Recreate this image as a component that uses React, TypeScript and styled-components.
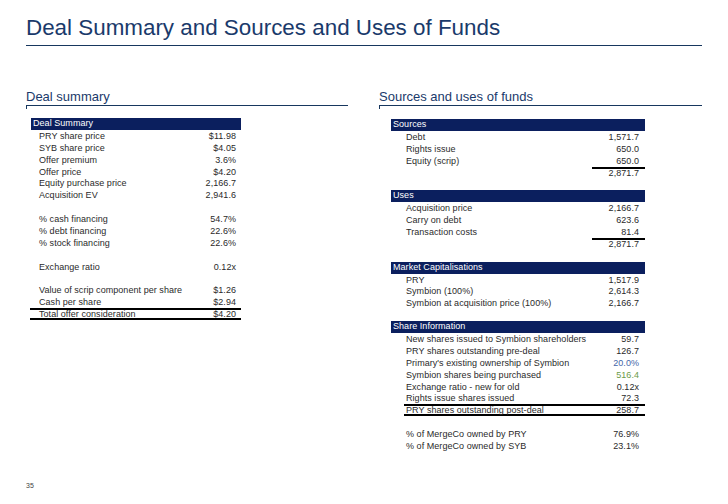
import React from "react";
import styled, { createGlobalStyle } from "styled-components";

const Global = createGlobalStyle`
  html, body { margin: 0; padding: 0; background: #fff; }
  body { font-family: "Liberation Sans", Arial, sans-serif; }
`;

const Page = styled.div`
  width: 728px;
  height: 504px;
  box-sizing: border-box;
  padding: 15px 26px 0 26px;
  display: flex;
  flex-direction: column;
  position: relative;
`;

const Title = styled.h1`
  margin: 0;
  font-weight: normal;
  font-size: 22.4px;
  line-height: 26px;
  color: #1a3a6b;
  padding-bottom: 4px;
  border-bottom: 1px solid #17375e;
`;

const Columns = styled.div`
  display: grid;
  grid-template-columns: 322px 323px;
  column-gap: 31px;
  margin-top: 43px;
`;

const Column = styled.div`
  display: flex;
  flex-direction: column;
`;

const SectionHead = styled.div`
  font-size: 13px;
  line-height: 15px;
  color: #1a3a6b;
  padding-bottom: 1px;
  border-bottom: 1px solid #17375e;
  position: relative;
  &::after {
    content: "";
    position: absolute;
    left: 0;
    bottom: -4px;
    width: 1px;
    height: 3px;
    background: #17375e;
  }
`;

const Table = styled.div<{ $left: number; $width: number; $top: number }>`
  margin-left: ${(p) => p.$left}px;
  width: ${(p) => p.$width}px;
  margin-top: ${(p) => p.$top}px;
  display: flex;
  flex-direction: column;
  font-size: 9px;
  letter-spacing: 0.05px;
  color: #2a2a2a;
`;

const Header = styled.div`
  height: 11.9px;
  line-height: 11.9px;
  background: #0b1f5e;
  color: #fff;
  padding-left: 2px;
  font-size: 9px;
`;

const Row = styled.div<{
  $indent: number;
  $pad: number;
  $lineStart?: number;
  $lines?: boolean;
}>`
  height: 11.9px;
  display: flex;
  align-items: center;
  margin-left: ${(p) => p.$lineStart ?? 0}px;
  padding-left: ${(p) => p.$indent - (p.$lineStart ?? 0)}px;
  padding-right: ${(p) => p.$pad}px;
  box-shadow: ${(p) =>
    p.$lines ? "inset 0 2px 0 #000, inset 0 -2px 0 #000" : "none"};
`;

const Label = styled.span`
  flex: 1;
  white-space: nowrap;
`;

const Value = styled.span<{ $color?: string }>`
  text-align: right;
  white-space: nowrap;
  color: ${(p) => p.$color ?? "inherit"};
`;

const TotalRow = styled.div`
  height: 11.9px;
  display: flex;
  justify-content: flex-end;
`;

const TotalValue = styled.span<{ $pad: number }>`
  width: 53px;
  box-sizing: border-box;
  text-align: right;
  padding-right: ${(p) => p.$pad}px;
  border-top: 2px solid #000;
  line-height: 9px;
`;

const Blank = styled.div`
  height: 11.9px;
`;

const PageNum = styled.div`
  position: absolute;
  left: 26px;
  top: 482px;
  font-size: 7px;
  color: #444;
`;

type Item =
  | { kind: "header"; label: string }
  | { kind: "row"; label: string; value: string; color?: string; lines?: boolean }
  | { kind: "total"; value: string }
  | { kind: "blank" };

const left: Item[] = [
  { kind: "header", label: "Deal Summary" },
  { kind: "row", label: "PRY share price", value: "$11.98" },
  { kind: "row", label: "SYB share price", value: "$4.05" },
  { kind: "row", label: "Offer premium", value: "3.6%" },
  { kind: "row", label: "Offer price", value: "$4.20" },
  { kind: "row", label: "Equity purchase price", value: "2,166.7" },
  { kind: "row", label: "Acquisition EV", value: "2,941.6" },
  { kind: "blank" },
  { kind: "row", label: "% cash financing", value: "54.7%" },
  { kind: "row", label: "% debt financing", value: "22.6%" },
  { kind: "row", label: "% stock financing", value: "22.6%" },
  { kind: "blank" },
  { kind: "row", label: "Exchange ratio", value: "0.12x" },
  { kind: "blank" },
  { kind: "row", label: "Value of scrip component per share", value: "$1.26" },
  { kind: "row", label: "Cash per share", value: "$2.94" },
  { kind: "row", label: "Total offer consideration", value: "$4.20", lines: true },
];

const right: Item[] = [
  { kind: "header", label: "Sources" },
  { kind: "row", label: "Debt", value: "1,571.7" },
  { kind: "row", label: "Rights issue", value: "650.0" },
  { kind: "row", label: "Equity (scrip)", value: "650.0" },
  { kind: "total", value: "2,871.7" },
  { kind: "blank" },
  { kind: "header", label: "Uses" },
  { kind: "row", label: "Acquisition price", value: "2,166.7" },
  { kind: "row", label: "Carry on debt", value: "623.6" },
  { kind: "row", label: "Transaction costs", value: "81.4" },
  { kind: "total", value: "2,871.7" },
  { kind: "blank" },
  { kind: "header", label: "Market Capitalisations" },
  { kind: "row", label: "PRY", value: "1,517.9" },
  { kind: "row", label: "Symbion (100%)", value: "2,614.3" },
  { kind: "row", label: "Symbion at acquisition price (100%)", value: "2,166.7" },
  { kind: "blank" },
  { kind: "header", label: "Share Information" },
  { kind: "row", label: "New shares issued to Symbion shareholders", value: "59.7" },
  { kind: "row", label: "PRY shares outstanding pre-deal", value: "126.7" },
  { kind: "row", label: "Primary's existing ownership of Symbion", value: "20.0%", color: "#3f66a8" },
  { kind: "row", label: "Symbion shares being purchased", value: "516.4", color: "#6c9b48" },
  { kind: "row", label: "Exchange ratio - new for old", value: "0.12x" },
  { kind: "row", label: "Rights issue shares issued", value: "72.3" },
  { kind: "row", label: "PRY shares outstanding post-deal", value: "258.7", lines: true },
  { kind: "blank" },
  { kind: "row", label: "% of MergeCo owned by PRY", value: "76.9%" },
  { kind: "row", label: "% of MergeCo owned by SYB", value: "23.1%" },
];

function renderItems(items: Item[], indent: number, pad: number, lineStart: number) {
  return items.map((it, i) => {
    switch (it.kind) {
      case "header":
        return <Header key={i}>{it.label}</Header>;
      case "blank":
        return <Blank key={i} />;
      case "total":
        return (
          <TotalRow key={i}>
            <TotalValue $pad={pad}>{it.value}</TotalValue>
          </TotalRow>
        );
      default:
        return (
          <Row
            key={i}
            $indent={indent}
            $pad={pad}
            $lines={it.lines}
            $lineStart={it.lines ? lineStart : 0}
          >
            <Label>{it.label}</Label>
            <Value $color={it.color}>{it.value}</Value>
          </Row>
        );
    }
  });
}

export default function App() {
  return (
    <>
      <Global />
      <Page>
        <Title>Deal Summary and Sources and Uses of Funds</Title>
        <Columns>
          <Column>
            <SectionHead>Deal summary</SectionHead>
            <Table $left={5} $width={210} $top={12}>
              {renderItems(left, 8, 5, -1)}
            </Table>
          </Column>
          <Column>
            <SectionHead>Sources and uses of funds</SectionHead>
            <Table $left={12} $width={254} $top={13}>
              {renderItems(right, 15, 6, 13)}
            </Table>
          </Column>
        </Columns>
        <PageNum>35</PageNum>
      </Page>
    </>
  );
}
